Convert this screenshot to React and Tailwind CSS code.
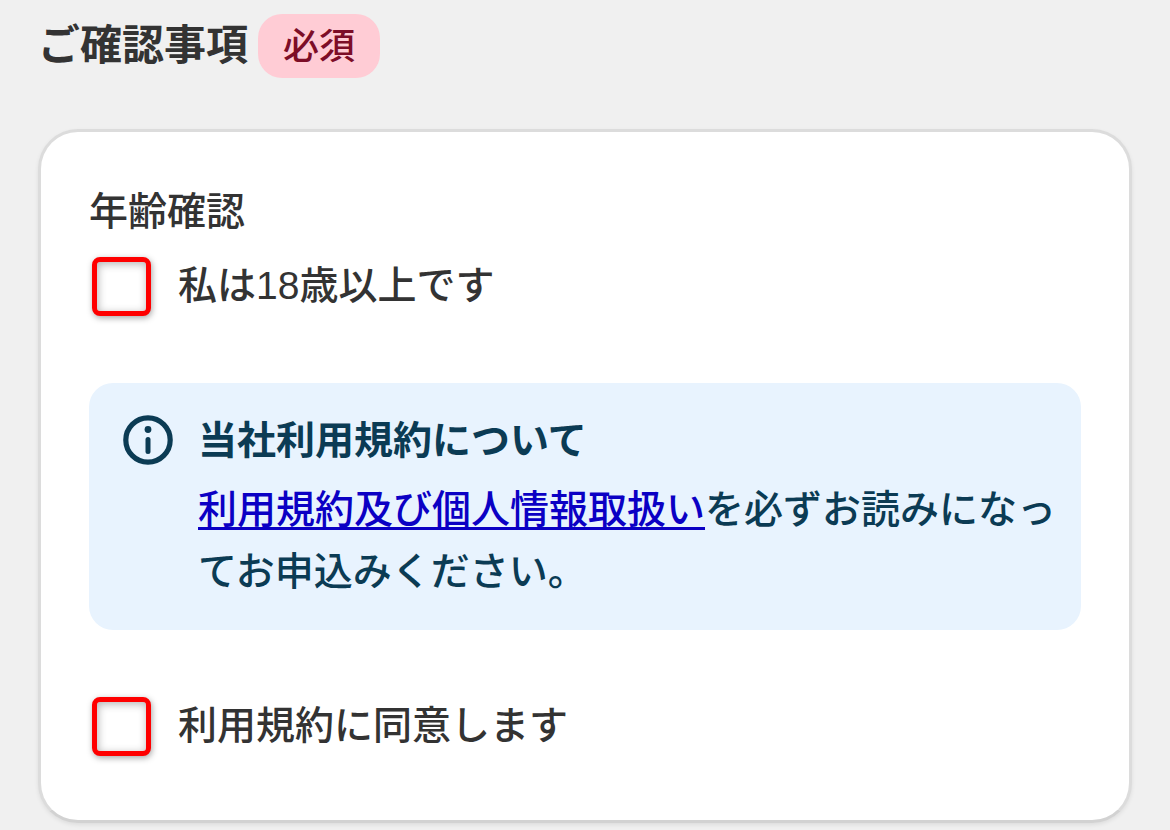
import React, { useState } from 'react';

function InfoIcon() {
  return (
    <svg className="size-[50px] shrink-0" viewBox="0 0 50 50" fill="none" aria-hidden="true">
      <circle cx="25" cy="25" r="22.2" stroke="currentColor" strokeWidth="5.2" />
      <circle cx="25" cy="14.5" r="3.4" fill="currentColor" />
      <path d="M25 24.5v12" stroke="currentColor" strokeWidth="5" strokeLinecap="round" />
    </svg>
  );
}

function CheckField({ id, label, checked, onChange }) {
  return (
    <div className="flex items-center gap-[27px] pl-[3px]">
      <input
        id={id}
        type="checkbox"
        checked={checked}
        onChange={(e) => onChange(e.target.checked)}
        className="size-[59px] shrink-0 appearance-none rounded-lg border-5 border-[#ff0000] bg-white shadow-[1px_2px_6px_rgba(0,0,0,0.35),inset_1px_2px_8px_rgba(0,0,0,0.3)] checked:bg-red-200"
      />
      <label htmlFor={id}>{label}</label>
    </div>
  );
}

function App() {
  const [isAdult, setIsAdult] = useState(false);
  const [agreed, setAgreed] = useState(false);

  return (
    <main className="min-h-screen bg-[#f0f0f0] px-[38px] pt-[14px] pb-2 font-['Liberation_Sans','Noto_Sans_CJK_JP',sans-serif] text-[39px] leading-[60px] font-medium text-[#333333]">
      <div className="flex items-center gap-[10px]">
        <h1 className="text-[42px] leading-[64px] font-bold">ご確認事項</h1>
        <span className="rounded-[24px] bg-[#ffccd5] px-[25px] pt-[2px] text-[36px] leading-[62px] text-[#7d0d27]">必須</span>
      </div>

      <section className="mt-[51px] rounded-[40px] border-3 border-[#dcdcdc] border-b-[#d2d2d2] bg-white px-12 pt-[50px] pb-16 shadow-[0_2px_4px_rgba(0,0,0,0.08)]">
        <h2>年齢確認</h2>
        <div className="mt-[14px]">
          <CheckField id="age" label="私は18歳以上です" checked={isAdult} onChange={setIsAdult} />
        </div>

        {/* お知らせ */}
        <div className="mt-[67px] mb-[66px] flex gap-[25px] rounded-[24px] bg-[#e8f3fe] pt-8 pr-5 pb-[27px] pl-[34px] text-[#0b3b54]">
          <InfoIcon />
          <div>
            <h3 className="leading-[52px] font-bold">当社利用規約について</h3>
            <p className="mt-3 leading-[62px]">
              <a href="#terms" className="text-[#0b00c4] underline decoration-3 underline-offset-4">利用規約及び個人情報取扱い</a>
              を必ずお読みになってお申込みください。
            </p>
          </div>
        </div>

        <CheckField id="terms" label="利用規約に同意します" checked={agreed} onChange={setAgreed} />
      </section>
    </main>
  );
}

export default App;
